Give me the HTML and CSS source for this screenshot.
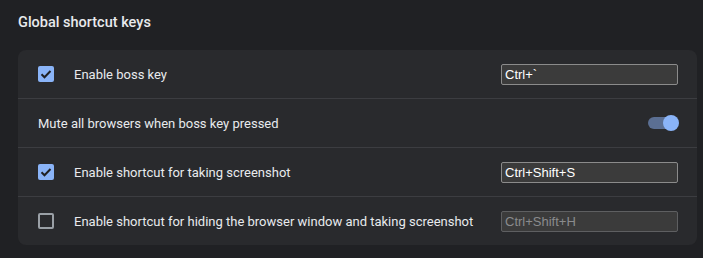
FILE: index.html
```html
<!DOCTYPE html>
<html>

<head>
    <meta charset="UTF-8">
    <title>Global shortcut keys</title>
    <link rel="stylesheet" href="styles.css">
</head>

<body>
    <div class="section-title">Global shortcut keys</div>
    <div class="card">
        <div class="row">
            <span class="checkbox checked">
                <svg viewBox="0 0 16 16"><path d="M3.5 8.2l3 3 6-6.2"></path></svg>
            </span>
            <span class="label">Enable boss key</span>
            <input class="shortcut" type="text" value="Ctrl+`">
        </div>
        <div class="row">
            <span class="label plain">Mute all browsers when boss key pressed</span>
            <span class="toggle on"><span class="knob"></span></span>
        </div>
        <div class="row">
            <span class="checkbox checked">
                <svg viewBox="0 0 16 16"><path d="M3.5 8.2l3 3 6-6.2"></path></svg>
            </span>
            <span class="label">Enable shortcut for taking screenshot</span>
            <input class="shortcut" type="text" value="Ctrl+Shift+S">
        </div>
        <div class="row">
            <span class="checkbox"></span>
            <span class="label">Enable shortcut for hiding the browser window and taking screenshot</span>
            <input class="shortcut" type="text" value="Ctrl+Shift+H" disabled>
        </div>
    </div>
</body>

</html>
```

FILE: styles.css
```css
html,
body {
    margin: 0;
    width: 100%;
    height: 100%;
    background-color: #202124;
}

body {
    padding: 0 6px 0 18px;
    box-sizing: border-box;
    font-family: Roboto, "Noto Sans", sans-serif;
    font-size: 13px;
    color: #e8eaed;
}

.section-title {
    height: 50px;
    line-height: 46px;
    font-size: 14.5px;
    font-weight: 500;
}

.card {
    background-color: #292a2d;
    border-radius: 8px;
}

.row {
    display: flex;
    align-items: center;
    height: 48px;
    padding: 0 19px 0 20px;
}

.row + .row {
    border-top: 1px solid #3c3d41;
}

.checkbox {
    box-sizing: border-box;
    width: 16px;
    height: 16px;
    margin-right: 20px;
    border: 2px solid #9aa0a6;
    border-radius: 2px;
    flex-shrink: 0;
}

.checkbox.checked {
    border: none;
    background-color: #8ab4f8;
}

.checkbox svg {
    display: block;
    width: 16px;
    height: 16px;
}

.checkbox path {
    fill: none;
    stroke: #202124;
    stroke-width: 2;
}

.label {
    flex: 1;
}

.shortcut {
    box-sizing: border-box;
    width: 177px;
    height: 21px;
    margin: 0;
    padding: 0 3px;
    border: 1px solid #8b8b8b;
    border-radius: 2px;
    background-color: #3b3b3b;
    color: #ffffff;
    font-family: "Liberation Sans", Arial, sans-serif;
    font-size: 13px;
    outline: none;
}

.shortcut:disabled {
    border-color: #5e5f61;
    color: #8a8b8d;
}

.toggle {
    position: relative;
    width: 30px;
    height: 12px;
    border-radius: 6px;
    background-color: #5b6f93;
}

.knob {
    position: absolute;
    top: -2px;
    right: -1px;
    width: 16px;
    height: 16px;
    border-radius: 50%;
    background-color: #8ab4f8;
}
```
